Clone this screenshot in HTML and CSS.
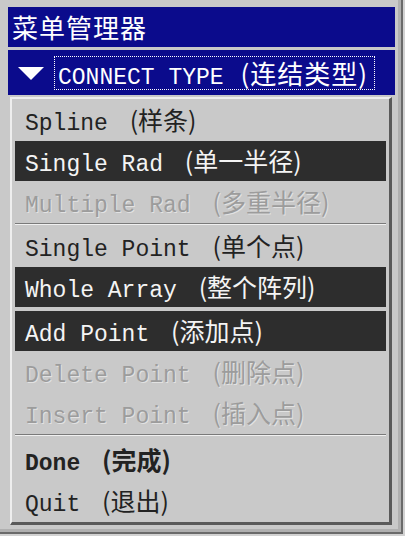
FILE: index.html
```html
<!DOCTYPE html>
<html lang="zh">
<head>
  <meta charset="UTF-8">
  <meta name="viewport" content="width=device-width, initial-scale=1.0">
  <title>菜单管理器</title>
  <link rel="stylesheet" href="styles.css">
</head>
<body>
  <div class="window">
    <div class="title">菜单管理器</div>
    <div class="header">
      <svg class="arrow" width="26" height="13" viewBox="0 0 26 13"><polygon points="0,0 26,0 13,13" fill="#fff"/></svg>
      <span class="focus">CONNECT TYPE <span class="cjk">(连结类型)</span></span>
    </div>
    <div class="panel">
      <div class="item">Spline <span class="cjk">(样条)</span></div>
      <div class="item active">Single Rad <span class="cjk">(单一半径)</span></div>
      <div class="item disabled">Multiple Rad <span class="cjk">(多重半径)</span></div>
      <div class="sep"></div>
      <div class="item">Single Point <span class="cjk">(单个点)</span></div>
      <div class="item active">Whole Array <span class="cjk">(整个阵列)</span></div>
      <div class="item active spaced">Add Point <span class="cjk">(添加点)</span></div>
      <div class="item disabled">Delete Point <span class="cjk">(删除点)</span></div>
      <div class="item disabled">Insert Point <span class="cjk">(插入点)</span></div>
      <div class="sep"></div>
      <div class="item bold spaced">Done <span class="cjk">(完成)</span></div>
      <div class="item">Quit <span class="cjk">(退出)</span></div>
    </div>
  </div>
</body>
</html>
```

FILE: styles.css
```css
html, body {
  margin: 0;
  padding: 0;
  background: #d2d2d2;
}
body {
  width: 405px;
  height: 536px;
  overflow: hidden;
}
.window {
  box-sizing: border-box;
  width: 403px;
  height: 534px;
  padding: 7px 6px 0 8px;
  border-right: 2px solid #6a6a6a;
  border-bottom: 2px solid #6a6a6a;
  background: #c9c9c9;
  box-shadow: inset -3px -3px 0 #b0b0b0;
}
.title {
  height: 40px;
  background: #0b0b8c;
  color: #fff;
  font-family: "Noto Sans CJK SC", sans-serif;
  font-size: 26px;
  line-height: 40px;
  padding-left: 4px;
  letter-spacing: 1px;
}
.header {
  height: 45px;
  margin-top: 3px;
  background: #0b0b8c;
  display: flex;
  align-items: center;
  padding-left: 10px;
  color: #fff;
}
.arrow {
  margin-right: 10px;
  margin-top: 2px;
}
.focus {
  border: 1px dotted #fff;
  padding: 0 6px 0 3px;
  height: 32px;
  line-height: 32px;
  font-family: "Liberation Mono", monospace;
  font-size: 23px;
  white-space: pre;
}
.focus .cjk {
  margin-left: 3px;
  font-size: 26px;
  letter-spacing: 1px;
}
.panel {
  margin: 2px 3px 0 2px;
  border-top: 2px solid #eeeeee;
  border-left: 2px solid #eeeeee;
  border-right: 3px solid #5a5a5a;
  border-bottom: 3px solid #5a5a5a;
  padding: 0 3px;
  background: #c9c9c9;
}
.item {
  height: 40px;
  margin: 1px 0;
  line-height: 38px;
  padding-left: 10px;
  font-family: "Liberation Mono", monospace;
  font-size: 23px;
  color: #222;
  white-space: pre;
}
.item.spaced {
  margin-top: 4px;
}
.cjk {
  font-family: "Noto Sans CJK SC", sans-serif;
  font-size: 25px;
  margin-left: 8px;
}
.item.active {
  background: #2d2d2d;
  color: #f4f4f4;
}
.item.disabled {
  color: #9c9c9c;
  text-shadow: 1px 1px 0 #e2e2e2;
}
.item.bold {
  font-weight: bold;
}
.sep {
  height: 1px;
  border-bottom: 1px solid #f0f0f0;
  background: #7a7a7a;
}
```
